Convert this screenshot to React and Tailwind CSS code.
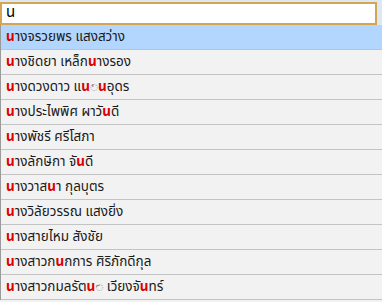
import React from 'react'

// 'o' marks a tone mark split off from its consonant; drawn on a dotted circle
const names = [
  [['น', 'hit'], ['างจรวยพร แสงสว่าง']],
  [['น', 'hit'], ['างชิดยา เหล็ก'], ['น', 'hit'], ['างรอง']],
  [['น', 'hit'], ['างดวงดาว แ'], ['น', 'hit'], ['\u0E48', 'o'], ['น', 'hit'], ['อุดร']],
  [['น', 'hit'], ['างประไพพิศ ผาวั'], ['น', 'hit'], ['ดี']],
  [['น', 'hit'], ['างพัชรี ศรีโสภา']],
  [['น', 'hit'], ['างลักษิกา จั'], ['น', 'hit'], ['ดี']],
  [['น', 'hit'], ['างวาส'], ['น', 'hit'], ['า กุลบุตร']],
  [['น', 'hit'], ['างวิลัยวรรณ แสงยิ่ง']],
  [['น', 'hit'], ['างสายไหม สังชัย']],
  [['น', 'hit'], ['างสาวก'], ['น', 'hit'], ['กการ ศิริภักดีกุล']],
  [['น', 'hit'], ['างสาวกมลรัต'], ['น', 'hit'], ['\u0E4C', 'o'], ['\u00A0เวียงจั'], ['น', 'hit'], ['ทร์']],
]

function App() {
  return (
    <div
      className="w-[382px] h-[302px] overflow-hidden bg-[#f2f2f2] text-[#1a1a1a]"
      style={{ fontFamily: 'Tahoma, "Noto Sans Thai", "Noto Sans", "DejaVu Sans", sans-serif' }}
    >
      <div className="flex h-[25px] bg-[#dce9f5] pt-[2px]">
        <div className="w-[377px] h-[23px] bg-white border-2 border-[#d4a651] flex items-center px-[4px] text-[15px] text-black">
          น
        </div>
      </div>
      <ul className="border-l border-[#9a9a9a]">
        {names.map((parts, i) => (
          <li
            key={i}
            className={
              'h-[25px] flex items-center pl-[5px] border-b border-[#c3c3c3] text-[13.5px] whitespace-pre ' +
              (i === 0 ? 'bg-[#b3d6fe]' : 'bg-[#f2f2f2]')
            }
          >
            {parts.map(([t, kind], j) => {
              if (kind === 'hit') {
                return <span key={j} className="text-[#e00000] font-bold">{t}</span>
              }
              if (kind === 'o') {
                return (
                  <span key={j} className="relative inline-flex items-center w-[8px] justify-center">
                    <span className="text-[9px] text-[#8a8a8a] leading-none" style={{ fontFamily: '"DejaVu Sans", sans-serif' }}>◌</span>
                    <span className="absolute left-[1px] top-[-1px] text-[#8a8a8a]">{'\u00A0' + t}</span>
                  </span>
                )
              }
              return <span key={j}>{t}</span>
            })}
          </li>
        ))}
      </ul>
    </div>
  )
}

export default App
